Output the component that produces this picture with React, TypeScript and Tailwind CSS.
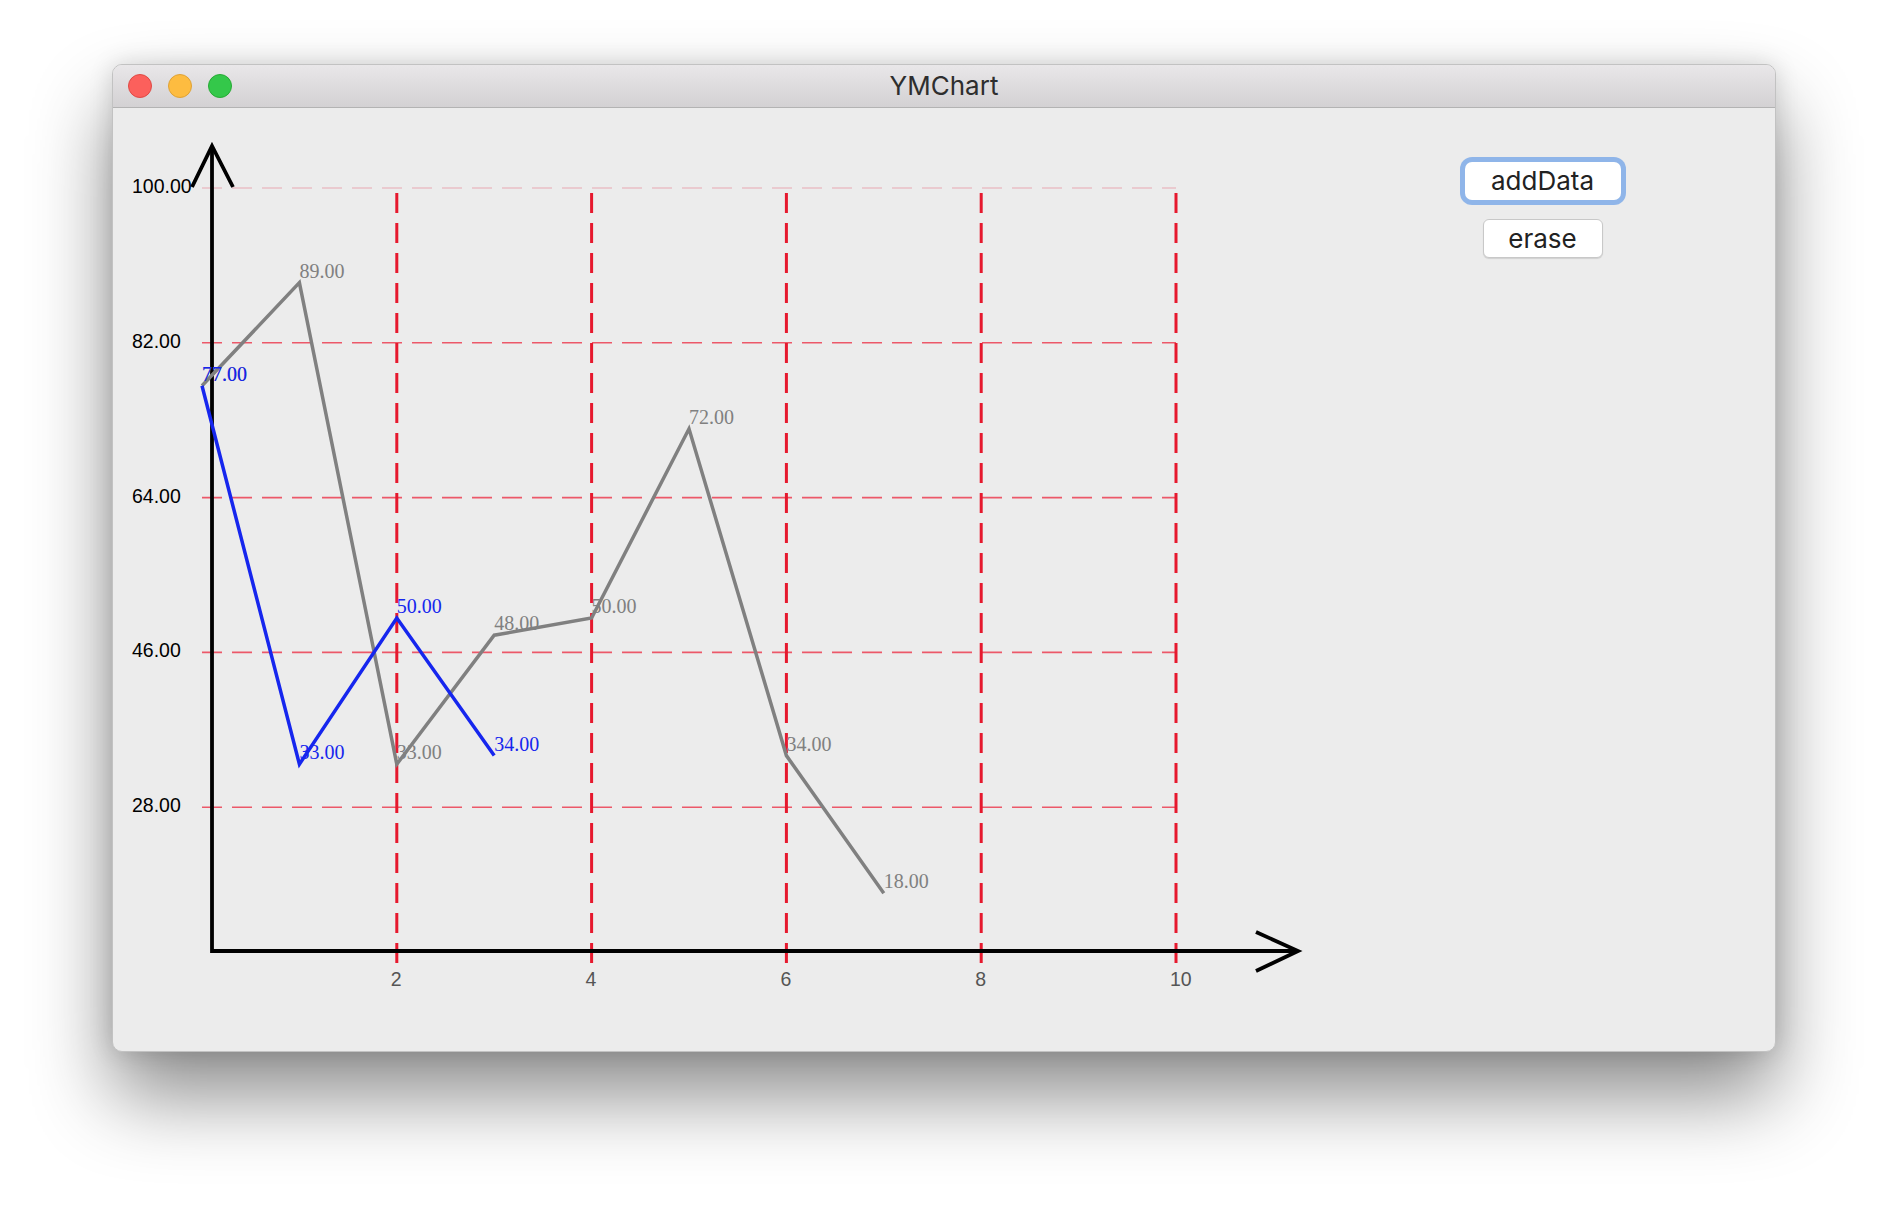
import React from "react";

const X0 = 202;
const STEP = 97.4;
const Y100 = 188;
const UNIT = 8.6;

const px = (i: number) => X0 + i * STEP;
const py = (v: number) => Y100 + (100 - v) * UNIT;

const grayData = [77, 89, 33, 48, 50, 72, 34, 18];
const blueData = [77, 33, 50, 34];
const yTicks = [100, 82, 64, 46, 28];
const xTicks = [2, 4, 6, 8, 10];

const sans = "'Liberation Sans', Arial, sans-serif";
const serif = "'Liberation Serif', 'Times New Roman', serif";

function Series({ data, color }: { data: number[]; color: string }) {
  const points = data.map((v, i) => `${px(i)},${py(v)}`).join(" ");
  return (
    <g>
      <polyline points={points} fill="none" stroke={color} strokeWidth={3.5} />
      {data.map((v, i) => (
        <text key={i} x={px(i)} y={py(v) - 5} fill={color} fontSize={20} fontFamily={serif}>
          {v.toFixed(2)}
        </text>
      ))}
    </g>
  );
}

function Chart() {
  return (
    <svg width={1197} height={943} viewBox="113 108 1197 943" className="block shrink-0">
      {/* horizontal grid */}
      {yTicks.map((v) => (
        <line
          key={v}
          x1={X0}
          x2={1176}
          y1={py(v)}
          y2={py(v)}
          stroke={v === 100 ? "#e9bec5" : "#ec5869"}
          strokeWidth={1.6}
          strokeDasharray="20 10"
        />
      ))}
      {/* vertical grid */}
      {xTicks.map((i) => (
        <line
          key={i}
          x1={px(i)}
          x2={px(i)}
          y1={193}
          y2={963}
          stroke="#e6192e"
          strokeWidth={3}
          strokeDasharray="20 10"
        />
      ))}

      {/* axes */}
      <g stroke="#000" strokeWidth={3.8} fill="none">
        <polyline points="212,146 212,951 1298,951" />
        <polyline points="192,187 212,146 233,187" />
        <polyline points="1256,932 1298,951 1256,971" />
      </g>

      {yTicks.map((v) => (
        <text key={v} x={132} y={py(v) + 5} fontSize={19.5} fontFamily={sans} fill="#000">
          {v.toFixed(2)}
        </text>
      ))}
      {xTicks.map((i) => (
        <text key={i} x={px(i) - 6} y={986} fontSize={19.5} fontFamily={sans} fill="#555">
          {i}
        </text>
      ))}

      <Series data={grayData} color="#808080" />
      <Series data={blueData} color="#1626ee" />
    </svg>
  );
}

export default function App() {
  return (
    <div className="min-h-[1212px] w-full bg-white pl-[112px] pt-[64px]">
      <div className="w-[1664px] h-[988px] rounded-[10px] overflow-hidden border border-[#c2c2c2] bg-[#ececec] flex flex-col shadow-[0_44px_80px_rgba(0,0,0,0.45),0_0_24px_rgba(0,0,0,0.14)]">
        <div className="h-[43px] shrink-0 box-border border-b border-[#b3b3b3] bg-gradient-to-b from-[#e9e7e9] to-[#d3d1d3] grid grid-cols-[1fr_auto_1fr] items-center">
          <div className="flex items-center gap-4 pl-[15px]">
            <span className="w-6 h-6 rounded-full bg-[#fc605c] border border-[#de4a45]"></span>
            <span className="w-6 h-6 rounded-full bg-[#fdbc40] border border-[#dea236]"></span>
            <span className="w-6 h-6 rounded-full bg-[#34c84a] border border-[#27aa35]"></span>
          </div>
          <div className="text-[26px] leading-none text-[#2e2e2e] font-[Inter,'Liberation_Sans',sans-serif]">
            YMChart
          </div>
          <div></div>
        </div>

        <div className="flex flex-1">
          <Chart />
          <div className="flex-1 flex flex-col items-center pt-[54px] gap-[19px]">
            <button className="w-[156px] h-[38px] rounded-[7px] bg-white text-[26px] leading-none text-[#222] font-[Inter,'Liberation_Sans',sans-serif] shadow-[0_0_0_5px_rgba(120,168,232,0.8)]">
              addData
            </button>
            <button className="w-[120px] h-[39px] rounded-[6px] bg-white border border-[#c8c8c8] text-[26px] leading-none text-[#222] font-[Inter,'Liberation_Sans',sans-serif] shadow-[0_1px_1px_rgba(0,0,0,0.12)]">
              erase
            </button>
          </div>
        </div>
      </div>
    </div>
  );
}
